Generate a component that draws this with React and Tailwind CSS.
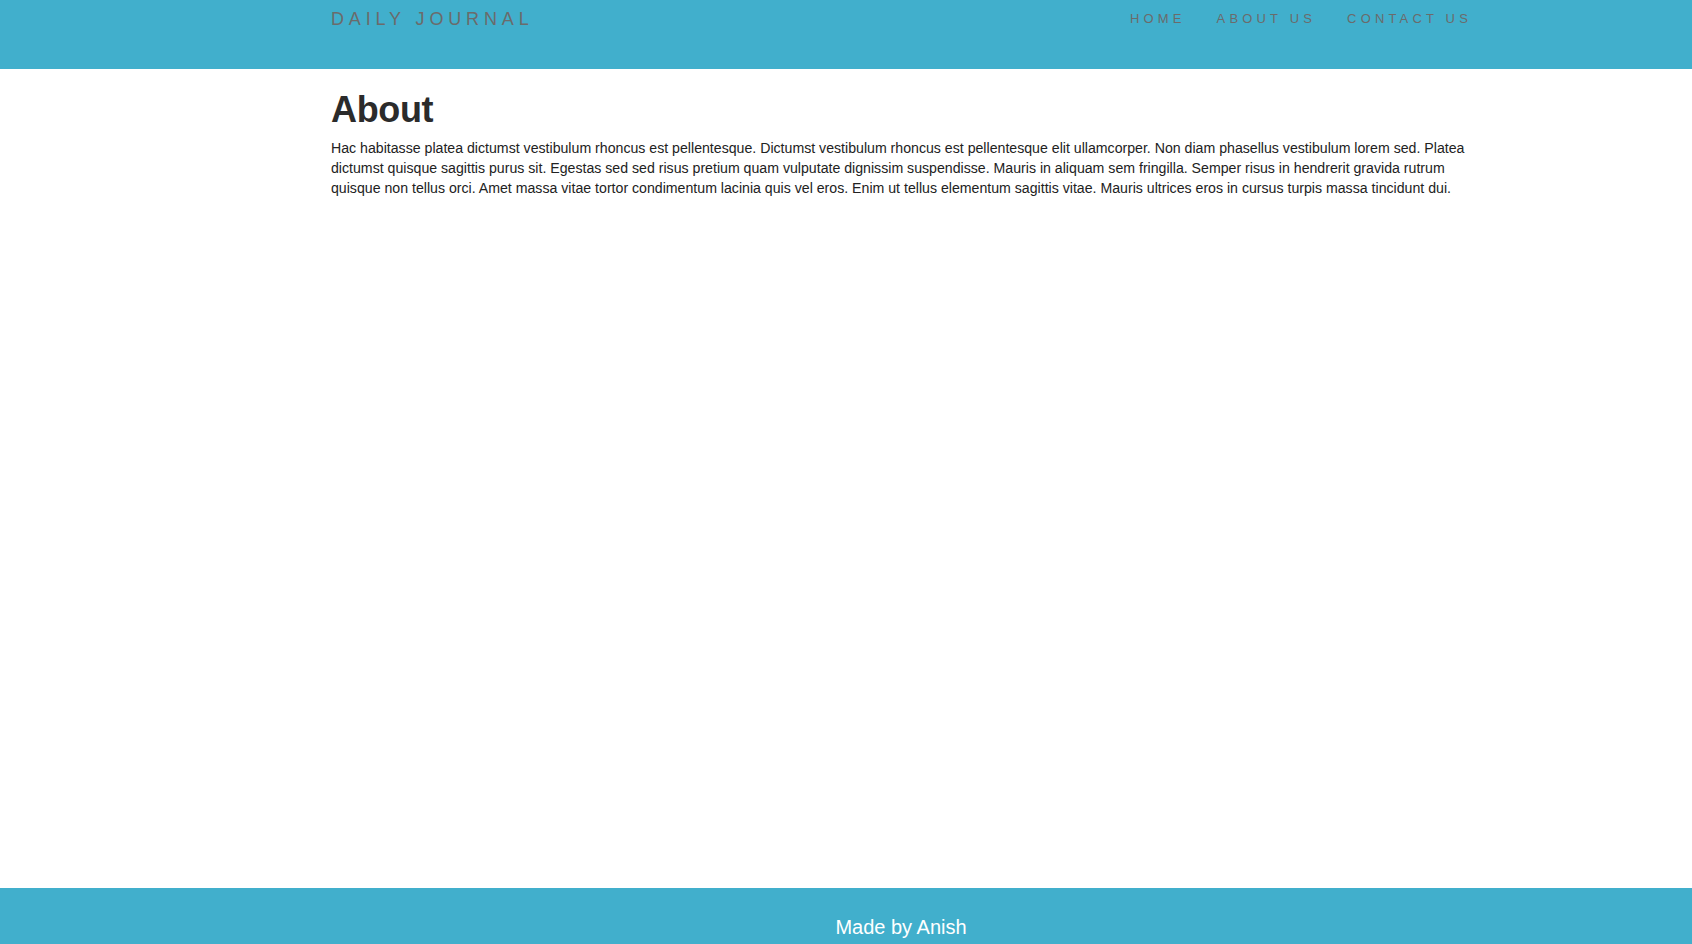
import React from 'react';

const links = ['Home', 'About Us', 'Contact Us'];

const Header = () => (
  <header className="h-[69px] bg-[#41afcc]">
    <div className="ml-[331px] w-[1140px] h-9 flex items-center justify-between">
      <a href="#" className="mt-[2px] text-[18px] leading-6 uppercase tracking-[0.27em] text-[#6b6b6b]">
        Daily Journal
      </a>
      <ul className="flex items-center gap-[31px] -mr-[1px]">
        {links.map((l) => (
          <li key={l}>
            <a href="#" className="text-[13px] leading-5 uppercase tracking-[0.32em] text-[#6b6b6b]">
              {l}
            </a>
          </li>
        ))}
      </ul>
    </div>
  </header>
);

export default function App() {
  return (
    <div className="min-h-screen flex flex-col bg-white font-['Liberation_Sans',Arial,sans-serif]">
      <Header />

      <main className="flex-1">
        <div className="ml-[331px] w-[1140px]">
          <h1 className="mt-[19px] text-[36px] leading-[43px] font-bold tracking-[-0.01em] text-[#2b2b2b]">
            About
          </h1>
          <p className="mt-[7px] text-[14.15px] leading-5 text-[#222]">
            Hac habitasse platea dictumst vestibulum rhoncus est pellentesque. Dictumst vestibulum rhoncus est pellentesque elit ullamcorper. Non diam phasellus vestibulum lorem sed. Platea dictumst quisque sagittis purus sit. Egestas sed sed risus pretium quam vulputate dignissim suspendisse. Mauris in aliquam sem fringilla. Semper risus in hendrerit gravida rutrum quisque non tellus orci. Amet massa vitae tortor condimentum lacinia quis vel eros. Enim ut tellus elementum sagittis vitae. Mauris ultrices eros in cursus turpis massa tincidunt dui.
          </p>
        </div>
      </main>

      <footer className="h-[56px] bg-[#41afcc]">
        <div className="ml-[331px] w-[1140px] pt-[25px] text-center">
          <p className="text-[20px] leading-7 text-white">Made by Anish</p>
        </div>
      </footer>
    </div>
  );
}
